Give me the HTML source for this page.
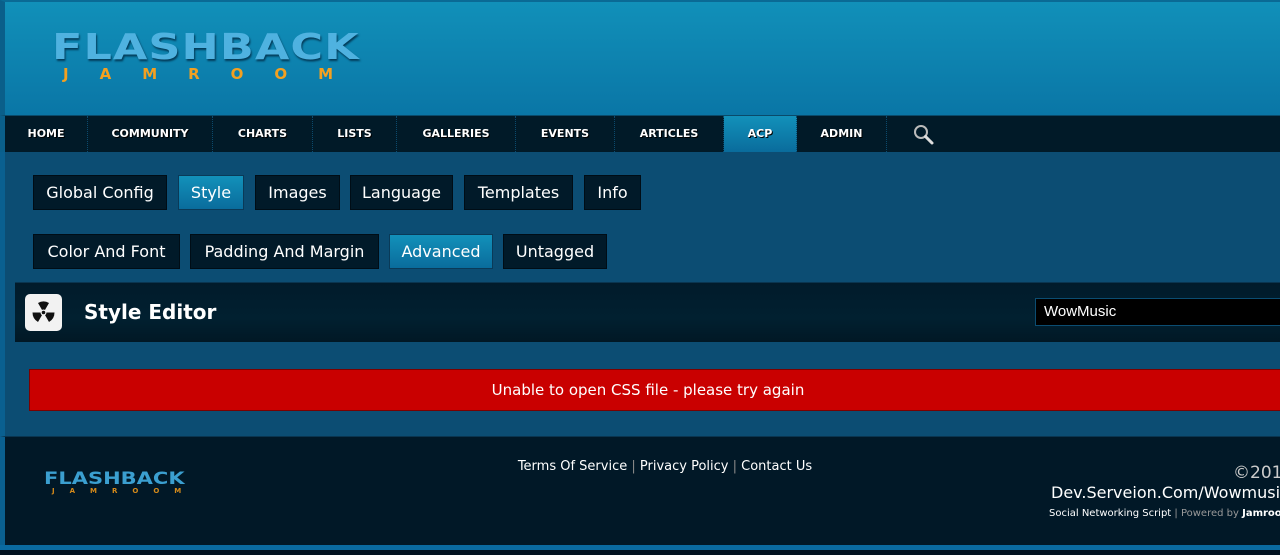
<!DOCTYPE html>
<html><head><style>
*{margin:0;padding:0;box-sizing:border-box}
body{width:1280px;height:555px;overflow:hidden;background:#011624;font-family:"DejaVu Sans","Liberation Sans",sans-serif;position:relative}
.abs{position:absolute}
#hdr{left:0;top:0;width:1280px;height:115px;background:linear-gradient(#1190b9,#0a76a6);border-left:5px solid #0a5f8a;border-top:2px solid #0a6a95}
#nav{left:0;top:115px;width:1280px;height:37px;background:#011a28;border-left:5px solid #0a5f8a;border-top:1px solid #0a4a6a}
.ni{position:absolute;top:0;height:36px;line-height:36px;color:#fff;font-size:11px;font-weight:bold;text-align:center;border-right:1px dotted #0b4a6d;text-shadow:1px 1px 0 #000}
#main{left:0;top:152px;width:1280px;height:284px;background:#0c4d73;border-left:5px solid #0a6090}
.tab{position:absolute;height:35px;line-height:33px;color:#fff;font-size:16px;text-align:center;background:#011a29;border:1px solid #000d16}
.tab.on{background:linear-gradient(#1291ba,#0a6c9c);border-color:#0a3a58}
#foot{left:0;top:436px;width:1280px;height:109px;background:#011827;border-left:5px solid #0a6090;border-top:1px solid #0a3550}
.logo{font-family:"DejaVu Sans",sans-serif;font-weight:bold;transform-origin:left top;white-space:nowrap}
</style></head><body>
<div id="hdr" class="abs">
 <div class="abs logo" style="left:47px;top:24px;font-size:42px;letter-spacing:1px;color:#4fb2e0;text-shadow:1px 2px 2px #033c5a;transform:scale(1.06,0.85)">FLASHBACK</div>
 <div class="abs" style="left:58px;top:63px;font-size:15px;font-weight:bold;color:#f3a020;letter-spacing:31px;white-space:nowrap">JAMROOM</div>
</div>
<div id="nav" class="abs">
 <div class="ni" style="left:0;width:83px">HOME</div>
 <div class="ni" style="left:83px;width:125px">COMMUNITY</div>
 <div class="ni" style="left:208px;width:100px">CHARTS</div>
 <div class="ni" style="left:308px;width:84px">LISTS</div>
 <div class="ni" style="left:392px;width:119px">GALLERIES</div>
 <div class="ni" style="left:511px;width:99px">EVENTS</div>
 <div class="ni" style="left:610px;width:109px">ARTICLES</div>
 <div class="ni" style="left:719px;width:73px;background:linear-gradient(#1291ba,#0a6c9c)">ACP</div>
 <div class="ni" style="left:792px;width:90px">ADMIN</div>
 <svg class="abs" style="left:907px;top:7px" width="26" height="24" viewBox="0 0 26 24"><circle cx="9" cy="9" r="6" fill="none" stroke="#bbb" stroke-width="2"/><line x1="13.5" y1="13.5" x2="20" y2="20" stroke="#ddd" stroke-width="3" stroke-linecap="round"/></svg>
</div>
<div id="main" class="abs">
 <div class="tab" style="left:28px;top:23px;width:134px">Global Config</div>
 <div class="tab on" style="left:173px;top:23px;width:66px">Style</div>
 <div class="tab" style="left:250px;top:23px;width:85px">Images</div>
 <div class="tab" style="left:345px;top:23px;width:103px">Language</div>
 <div class="tab" style="left:459px;top:23px;width:109px">Templates</div>
 <div class="tab" style="left:579px;top:23px;width:57px">Info</div>
 <div class="tab" style="left:28px;top:82px;width:147px">Color And Font</div>
 <div class="tab" style="left:185px;top:82px;width:189px">Padding And Margin</div>
 <div class="tab on" style="left:384px;top:82px;width:104px">Advanced</div>
 <div class="tab" style="left:498px;top:82px;width:104px">Untagged</div>
 <div class="abs" style="left:10px;top:130px;width:1270px;height:60px;background:linear-gradient(#011b2b,#012030 60%,#011825);border-top:1px solid #0a3550">
  <div class="abs" style="left:10px;top:11px;width:37px;height:37px;background:#f2f2f2;border-radius:5px"></div>
  <svg class="abs" style="left:10px;top:11px" width="37" height="37" viewBox="0 0 37 37"><g fill="#111"><path d="M18.5 18.5 L13 9 A11 11 0 0 1 24 9Z"/><path d="M18.5 18.5 L29.5 18.5 A11 11 0 0 1 24 28Z"/><path d="M18.5 18.5 L13 28 A11 11 0 0 1 7.5 18.5Z"/></g><circle cx="18.5" cy="18.5" r="3" fill="#f2f2f2"/><circle cx="18.5" cy="18.5" r="1.8" fill="#111"/></svg>
  <div class="abs" style="left:69px;top:17px;color:#fff;font-size:20px;font-weight:bold">Style Editor</div>
  <div class="abs" style="left:1020px;top:15px;width:260px;height:28px;background:#000;border:1px solid #0b4d72;color:#fff;font-size:15px;line-height:26px;padding-left:8px;font-family:'Liberation Sans',sans-serif">WowMusic</div>
 </div>
 <div class="abs" style="left:24px;top:217px;width:1256px;height:42px;background:#c90000;border:1px solid #7a0000;color:#fff;font-size:15px;text-align:center;line-height:40px;padding-right:18px">Unable to open CSS file - please try again</div>
</div>
<div id="foot" class="abs">
 <div class="abs logo" style="left:39px;top:31px;font-size:20px;color:#3b9fd0;transform:scale(1.05,0.85)">FLASHBACK</div>
 <div class="abs" style="left:47px;top:50px;font-size:7px;font-weight:bold;color:#d58a1a;letter-spacing:15px;white-space:nowrap">JAMROOM</div>
 <div class="abs" style="left:460px;top:22px;width:400px;text-align:center;color:#fff;font-size:13px;white-space:nowrap">Terms Of Service <span style="color:#888">|</span> Privacy Policy <span style="color:#888">|</span> Contact Us</div>
 <div class="abs" style="left:1228px;top:26px;color:#ccc;font-size:17px;white-space:nowrap">©2014</div>
 <div class="abs" style="left:1046px;top:46px;color:#fff;font-size:16px;white-space:nowrap">Dev.Serveion.Com/Wowmusic</div>
 <div class="abs" style="left:1044px;top:71px;color:#fff;font-size:10px;white-space:nowrap">Social Networking Script <span style="color:#999">| Powered by</span> <b>Jamroom</b></div>
</div>
<div class="abs" style="left:0;top:545px;width:1280px;height:5px;background:#0a6aa0"></div>
<div class="abs" style="left:0;top:550px;width:1280px;height:5px;background:#021220"></div>
</body></html>
